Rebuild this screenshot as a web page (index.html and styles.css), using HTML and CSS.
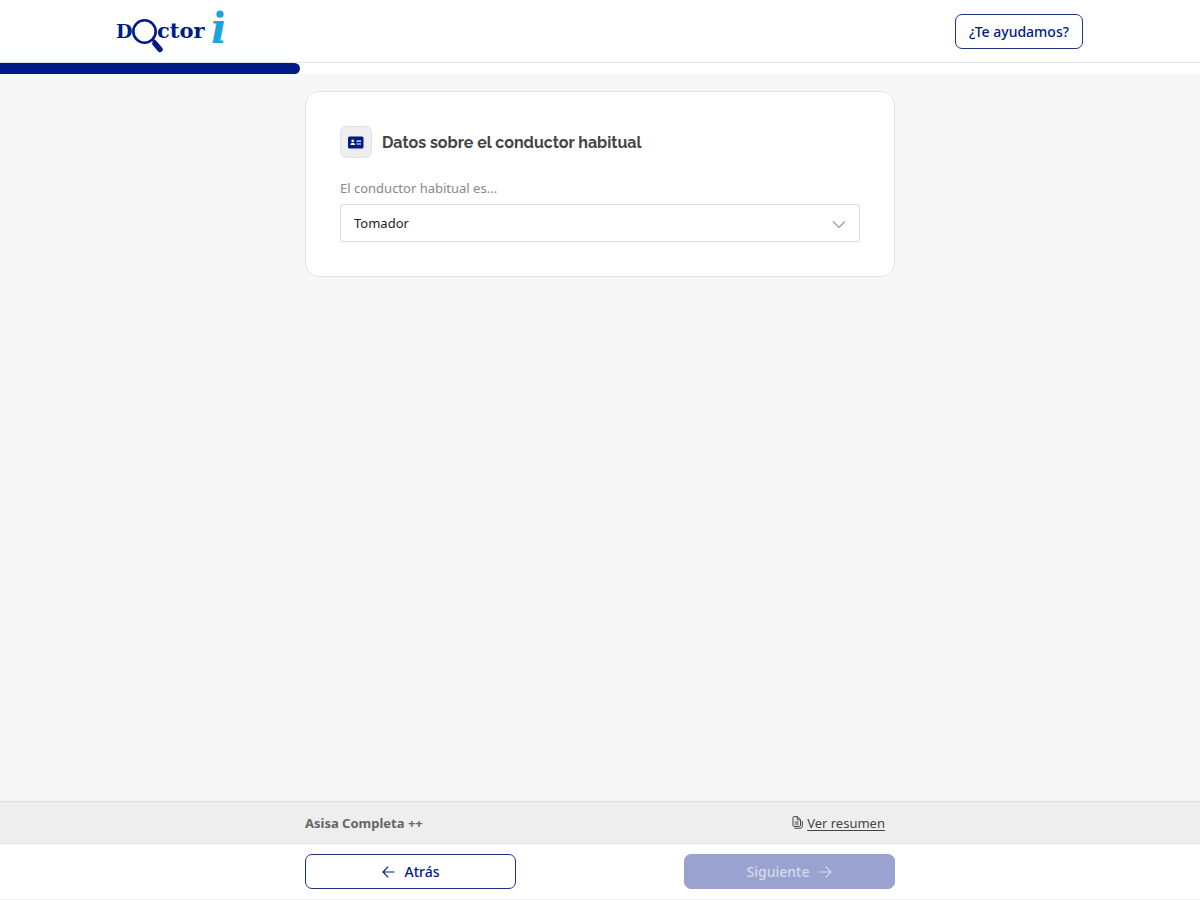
FILE: index.html
```html
<!DOCTYPE html>
<html lang="es">
<head>
  <meta charset="UTF-8" />
  <meta name="viewport" content="width=device-width, initial-scale=1.0"/>
  <title>Doctor i - Conductor habitual</title>
  <link rel="stylesheet" href="styles.css">
</head>
<body>

<header class="header">
  <div class="header-inner">
    <a class="logo" href="#" aria-label="Doctor i">
      <svg width="120" height="62" viewBox="0 0 120 62">
        <text class="logo-word" x="-1" y="38">D</text>
        <circle cx="27.500" cy="31.500" r="11.200" fill="none" stroke="#001b85" stroke-width="2.600"/>
        <path d="M35 39l3 3" stroke="#001b85" stroke-width="3"/>
        <path d="M38 43.500l5 6" stroke="#001b85" stroke-width="5.500" stroke-linecap="round"/>
        <text class="logo-word logo-rest" x="40" y="38">ctor</text>
        <circle cx="103" cy="14.200" r="3.600" fill="#1ba3dc"/>
        <text class="logo-i" x="93" y="43">ı</text>
      </svg>
    </a>
    <button class="btn btn-help" type="button">¿Te ayudamos?</button>
  </div>
</header>

<div class="progress" role="progressbar" aria-label="Progreso" aria-valuenow="25" aria-valuemin="0" aria-valuemax="100">
  <div class="progress-fill" style="width: 25%"></div>
</div>

<main class="main">
  <section class="card">
    <div class="card-title">
      <span class="card-icon">
        <svg width="16" height="14" viewBox="0 -1 16 14">
          <rect y="0.500" width="15.500" height="12" rx="1.500" fill="#001b85"/>
          <circle cx="4.700" cy="4.900" r="1.300" fill="#fff"/>
          <path d="M2.500 9c0-3 4.500-3 4.500 0z" fill="#fff"/>
          <path d="M8.500 5.200h4.500M8.500 8h4.500" stroke="#fff" stroke-width="1.200"/>
        </svg>
      </span>
      <h1>Datos sobre el conductor habitual</h1>
    </div>
    <label class="label" for="conductor">El conductor habitual es...</label>
    <div class="select">
      <select id="conductor">
        <option>Tomador</option>
      </select>
      <svg class="chevron" width="14" height="12" viewBox="0 -4 14 12">
        <path d="M1.200 .5L7 6.300 12.800 .5" fill="none" stroke="#999" stroke-width="1.200"/>
      </svg>
    </div>
  </section>
</main>

<footer>
  <div class="summary">
    <div class="wrap">
      <strong>Asisa Completa ++</strong>
      <a class="summary-link" href="#">
        <svg width="11" height="13" viewBox="0 0 11 13" fill="none" stroke="#444">
          <path d="M1 1.500Q1 .6 1.900.6H5.500L8.500 3.600V9.500Q8.500 10.400 7.600 10.400H1.900Q1 10.400 1 9.500z"/>
          <path d="M5.300.8v3h3M2.700 6h4M2.700 8h4"/>
          <path d="M2.500 12.200h6q1.800 0 1.800-1.800V5"/>
        </svg>
        <span>Ver resumen</span>
      </a>
    </div>
  </div>
  <div class="nav">
    <div class="wrap">
      <button class="btn btn-nav" type="button">
        <svg width="13" height="12" viewBox="0 0 13 12" fill="none" stroke="currentColor" stroke-width="1.200">
          <path d="M12.500 6H1M6.200.7L1 6l5.200 5.300"/>
        </svg>
        Atrás
      </button>
      <button class="btn btn-nav btn-next" type="button" disabled>
        Siguiente
        <svg width="13" height="12" viewBox="0 0 13 12" fill="none" stroke="currentColor" stroke-width="1.200">
          <path d="M.5 6H12M6.800.7L12 6l-5.200 5.300"/>
        </svg>
      </button>
    </div>
  </div>
</footer>

</body>
</html>
```
FILE: styles.css
```css
* {
  box-sizing: border-box;
}
body {
  margin: 0;
  min-height: 100vh;
  display: flex;
  flex-direction: column;
  background-color: #f7f7f7;
  font-family: "Noto Sans", sans-serif;
  font-size: 13px;
  color: #444;
}
.header {
  background: #fff;
  border-bottom: 1px solid #e4e4e4;
}
.header-inner {
  display: flex;
  align-items: center;
  justify-content: space-between;
  max-width: 966px;
  height: 62px;
  margin: 0 auto;
}
.logo svg {
  display: block;
  overflow: visible;
}
.logo-word {
  font-family: "DejaVu Serif", serif;
  font-weight: bold;
  font-size: 19px;
  fill: #001b85;
}
.logo-rest {
  font-size: 21px;
}
.logo-i {
  font-family: "DejaVu Serif", serif;
  font-weight: bold;
  font-style: italic;
  font-size: 42px;
  fill: #1ba3dc;
}
.btn {
  display: flex;
  align-items: center;
  justify-content: center;
  height: 35px;
  border: 1px solid #1d3483;
  border-radius: 7px;
  background: #fff;
  color: #001b85;
  font-family: inherit;
  font-size: 14px;
  font-weight: 500;
  cursor: pointer;
}
.btn-help {
  padding: 0 13px;
}
.progress {
  height: 11px;
  background: #fff;
}
.progress-fill {
  height: 11px;
  background: #001b85;
  border-radius: 0 6px 6px 0;
}
.main {
  flex: 1;
  padding: 17px 20px;
}
.card {
  max-width: 590px;
  margin: 0 auto;
  padding: 34px;
  background: #fff;
  border: 1px solid #e2e2e2;
  border-radius: 14px;
}
.card-title {
  display: flex;
  align-items: center;
  gap: 10px;
  margin-bottom: 20px;
}
.card-icon {
  display: flex;
  align-items: center;
  justify-content: center;
  width: 32px;
  height: 32px;
  background: #eee;
  border: 1px solid #e2e2e2;
  border-radius: 6px;
}
h1 {
  margin: 0;
  font-family: Raleway, sans-serif;
  font-size: 16px;
  font-weight: 700;
  line-height: 25px;
}
.label {
  display: block;
  margin-bottom: 6px;
  line-height: 20px;
  color: #888;
}
.select {
  display: grid;
  align-items: center;
}
.select select,
.chevron {
  grid-area: 1 / 1;
}
.select select {
  appearance: none;
  width: 100%;
  height: 38px;
  padding: 0 13px;
  border: 1px solid #ddd;
  border-radius: 3px;
  background: #fff;
  color: #222;
  font-family: inherit;
  font-size: 13px;
}
.chevron {
  justify-self: end;
  margin-right: 14px;
  pointer-events: none;
}
.wrap {
  display: flex;
  align-items: center;
  justify-content: space-between;
  max-width: 590px;
  margin: 0 auto;
}
.summary {
  background: #eee;
  border-top: 1px solid #ddd;
  border-bottom: 1px solid #e2e2e2;
}
.summary .wrap {
  height: 41px;
}
.summary strong {
  color: #666;
}
.summary-link {
  display: flex;
  align-items: center;
  gap: 4px;
  margin-right: 10px;
  color: #444;
  text-decoration: none;
}
.summary-link span {
  text-decoration: underline;
  text-underline-offset: 2px;
}
.nav {
  padding: 10px 0;
  background: #fff;
  border-bottom: 1px solid #eee;
}
.btn-nav {
  gap: 10px;
  width: 211px;
}
.btn-next {
  background: #9aa3cf;
  border-color: #9aa3cf;
  color: #d4daee;
  cursor: default;
}
```
